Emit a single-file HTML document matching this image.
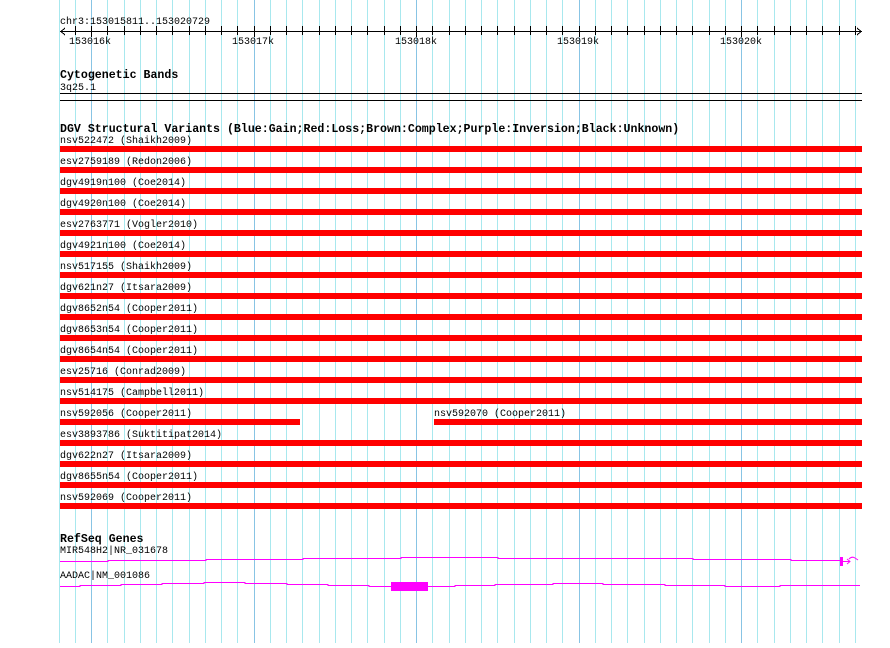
<!DOCTYPE html>
<html><head><meta charset="utf-8"><style>
html,body{margin:0;padding:0;background:#fff;}
svg text{font-family:"Liberation Mono","DejaVu Sans Mono",monospace;}
.t{font-size:10px;fill:#000;}
.b{font-size:11.6px;font-weight:bold;fill:#000;}
</style></head><body>
<svg width="890" height="643" xmlns="http://www.w3.org/2000/svg" shape-rendering="crispEdges">
<rect width="890" height="643" fill="#fff"/>
<path stroke="#a8e8ee" fill="none" d="M59.5 0V643M75.5 0V643M107.5 0V643M124.5 0V643M140.5 0V643M156.5 0V643M172.5 0V643M189.5 0V643M205.5 0V643M221.5 0V643M237.5 0V643M270.5 0V643M286.5 0V643M302.5 0V643M319.5 0V643M335.5 0V643M351.5 0V643M367.5 0V643M384.5 0V643M400.5 0V643M432.5 0V643M449.5 0V643M465.5 0V643M481.5 0V643M497.5 0V643M514.5 0V643M530.5 0V643M546.5 0V643M562.5 0V643M595.5 0V643M611.5 0V643M627.5 0V643M644.5 0V643M660.5 0V643M676.5 0V643M692.5 0V643M709.5 0V643M725.5 0V643M757.5 0V643M774.5 0V643M790.5 0V643M806.5 0V643M822.5 0V643M839.5 0V643M855.5 0V643"/>
<path stroke="#88c4e4" fill="none" d="M91.5 0V643M254.5 0V643M416.5 0V643M579.5 0V643M741.5 0V643"/>
<path stroke="#000" fill="none" d="M75.5 26V35M107.5 26V35M124.5 26V35M140.5 26V35M156.5 26V35M172.5 26V35M189.5 26V35M205.5 26V35M221.5 26V35M237.5 26V35M270.5 26V35M286.5 26V35M302.5 26V35M319.5 26V35M335.5 26V35M351.5 26V35M367.5 26V35M384.5 26V35M400.5 26V35M432.5 26V35M449.5 26V35M465.5 26V35M481.5 26V35M497.5 26V35M514.5 26V35M530.5 26V35M546.5 26V35M562.5 26V35M595.5 26V35M611.5 26V35M627.5 26V35M644.5 26V35M660.5 26V35M676.5 26V35M692.5 26V35M709.5 26V35M725.5 26V35M757.5 26V35M774.5 26V35M790.5 26V35M806.5 26V35M822.5 26V35M839.5 26V35M855.5 26V35M91.5 26V37M254.5 26V37M416.5 26V37M579.5 26V37M741.5 26V37"/>
<text class="t" x="60" y="24">chr3:153015811..153020729</text>
<line x1="60" y1="31.5" x2="862" y2="31.5" stroke="#000"/>
<path d="M65 28 L61 31.5 L65 35 M857 28 L861 31.5 L857 35" stroke="#000" fill="none"/>
<text class="t" x="69" y="44">153016k</text>
<text class="t" x="232" y="44">153017k</text>
<text class="t" x="395" y="44">153018k</text>
<text class="t" x="557" y="44">153019k</text>
<text class="t" x="720" y="44">153020k</text>
<text class="b" x="60" y="78">Cytogenetic Bands</text>
<text class="t" x="60" y="90">3q25.1</text>
<rect x="60" y="93" width="802" height="1" fill="#000"/>
<rect x="60" y="100" width="802" height="1" fill="#000"/>
<text class="b" x="60" y="132">DGV Structural Variants (Blue:Gain;Red:Loss;Brown:Complex;Purple:Inversion;Black:Unknown)</text>
<g fill="#f00">
<rect x="60" y="146" width="802" height="6"/>
<rect x="60" y="167" width="802" height="6"/>
<rect x="60" y="188" width="802" height="6"/>
<rect x="60" y="209" width="802" height="6"/>
<rect x="60" y="230" width="802" height="6"/>
<rect x="60" y="251" width="802" height="6"/>
<rect x="60" y="272" width="802" height="6"/>
<rect x="60" y="293" width="802" height="6"/>
<rect x="60" y="314" width="802" height="6"/>
<rect x="60" y="335" width="802" height="6"/>
<rect x="60" y="356" width="802" height="6"/>
<rect x="60" y="377" width="802" height="6"/>
<rect x="60" y="398" width="802" height="6"/>
<rect x="60" y="419" width="240" height="6"/>
<rect x="434" y="419" width="428" height="6"/>
<rect x="60" y="440" width="802" height="6"/>
<rect x="60" y="461" width="802" height="6"/>
<rect x="60" y="482" width="802" height="6"/>
<rect x="60" y="503" width="802" height="6"/>
</g>
<text class="t" x="60" y="143">nsv522472 (Shaikh2009)</text>
<text class="t" x="60" y="164">esv2759189 (Redon2006)</text>
<text class="t" x="60" y="185">dgv4919n100 (Coe2014)</text>
<text class="t" x="60" y="206">dgv4920n100 (Coe2014)</text>
<text class="t" x="60" y="227">esv2763771 (Vogler2010)</text>
<text class="t" x="60" y="248">dgv4921n100 (Coe2014)</text>
<text class="t" x="60" y="269">nsv517155 (Shaikh2009)</text>
<text class="t" x="60" y="290">dgv621n27 (Itsara2009)</text>
<text class="t" x="60" y="311">dgv8652n54 (Cooper2011)</text>
<text class="t" x="60" y="332">dgv8653n54 (Cooper2011)</text>
<text class="t" x="60" y="353">dgv8654n54 (Cooper2011)</text>
<text class="t" x="60" y="374">esv25716 (Conrad2009)</text>
<text class="t" x="60" y="395">nsv514175 (Campbell2011)</text>
<text class="t" x="60" y="416">nsv592056 (Cooper2011)</text>
<text class="t" x="434" y="416">nsv592070 (Cooper2011)</text>
<text class="t" x="60" y="437">esv3893786 (Suktitipat2014)</text>
<text class="t" x="60" y="458">dgv622n27 (Itsara2009)</text>
<text class="t" x="60" y="479">dgv8655n54 (Cooper2011)</text>
<text class="t" x="60" y="500">nsv592069 (Cooper2011)</text>
<text class="b" x="60" y="542">RefSeq Genes</text>
<text class="t" x="60" y="553">MIR548H2|NR_031678</text>
<path d="M60 561.5H108V560.5H206V559.5H303V558.5H401V557.5H498V558.5H693V559.5H791V560.5H841" stroke="#f0f" fill="none"/>
<rect x="840" y="557" width="3" height="9" fill="#f0f"/>
<path d="M843 561.5H850M847 559l3 2.5-3 2.5M849 559q3-3 6-1l3 2" stroke="#f0f" fill="none" shape-rendering="auto"/>
<text class="t" x="60" y="578">AADAC|NM_001086</text>
<path d="M60 586.5H80V585.5H121V584.5H162V583.5H204V582.5H245V583.5H287V584.5H328V585.5H369V586.5H391M428 586.5H455V585.5H495V584.5H553V583.5H603V584.5H665V585.5H725V586.5H780V585.5H860" stroke="#f0f" fill="none"/>
<rect x="391" y="582" width="37" height="9" fill="#f0f"/>
</svg>
</body></html>
